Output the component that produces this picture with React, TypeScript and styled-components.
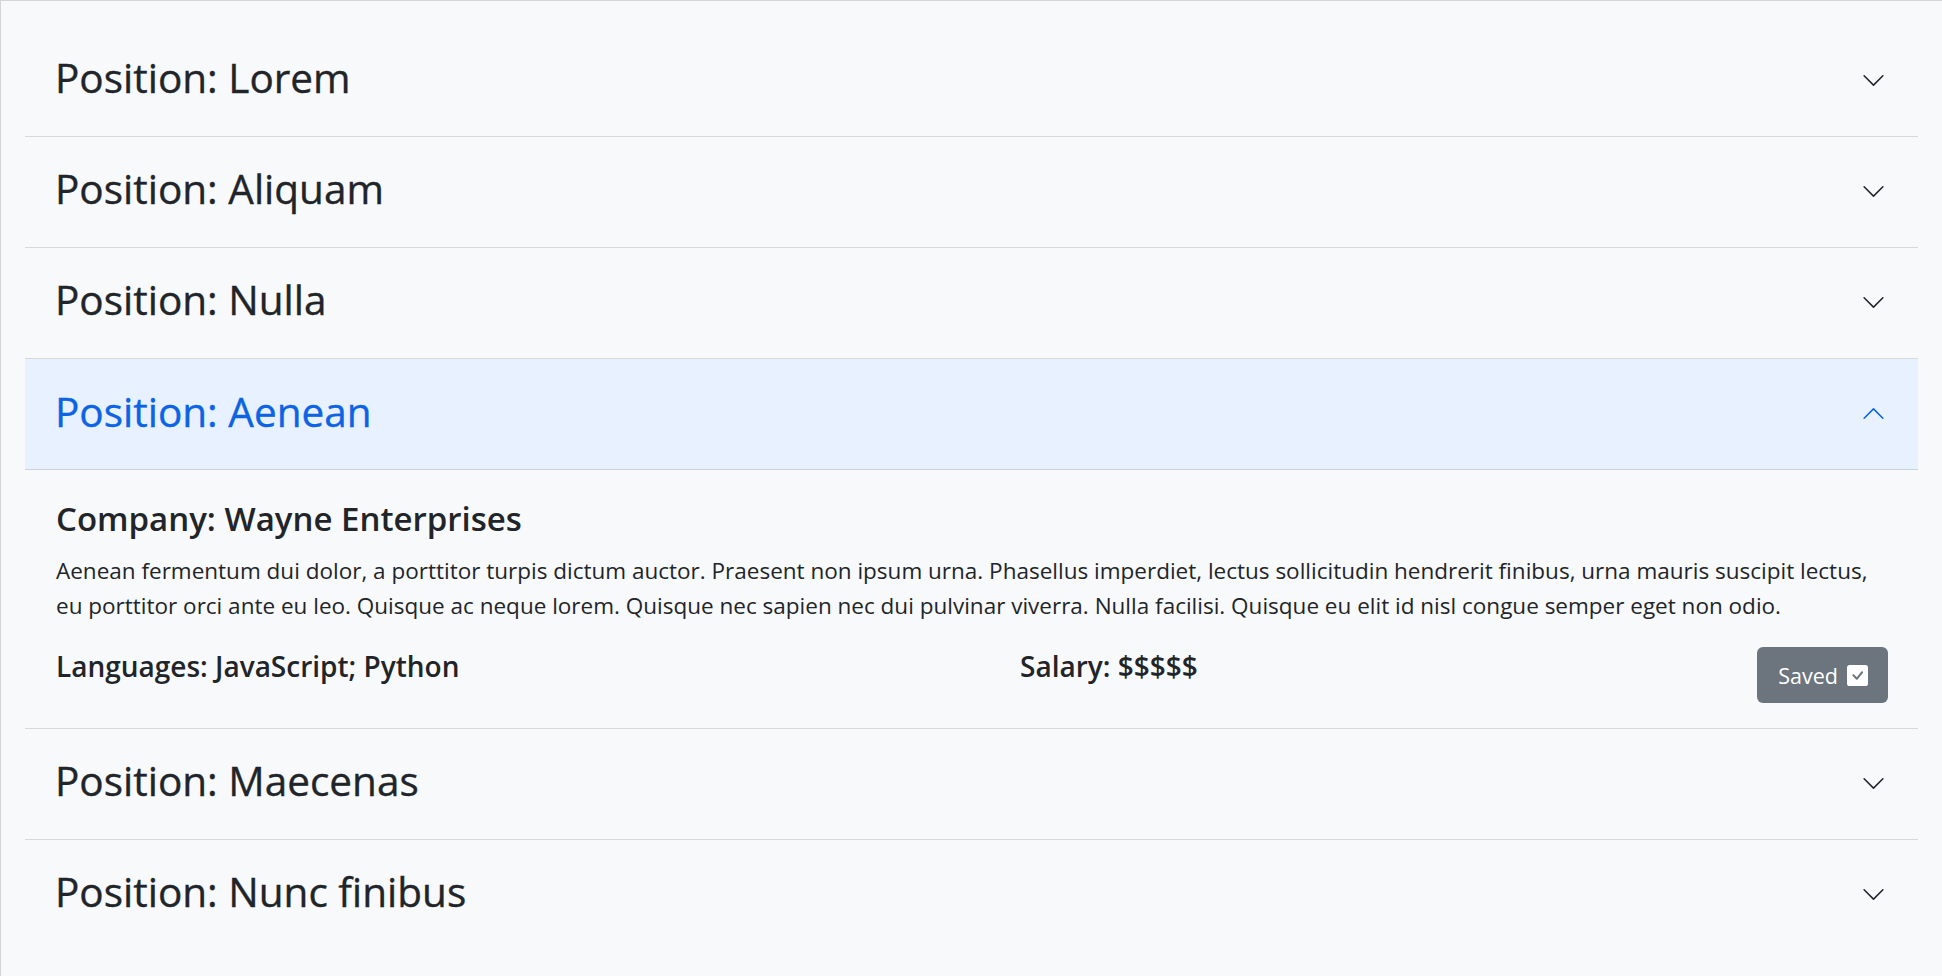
import { useState } from 'react';
import styled, { createGlobalStyle } from 'styled-components';

interface Job {
  position: string;
  company: string;
  description: string;
  languages: string;
  salary: string;
}

const LOREM =
  'Aenean fermentum dui dolor, a porttitor turpis dictum auctor. Praesent non ipsum urna. Phasellus imperdiet, lectus sollicitudin hendrerit finibus, urna mauris suscipit lectus, eu porttitor orci ante eu leo. Quisque ac neque lorem. Quisque nec sapien nec dui pulvinar viverra. Nulla facilisi. Quisque eu elit id nisl congue semper eget non odio.';

const jobs: Job[] = [
  { position: 'Lorem', company: 'Acme Corporation', description: LOREM, languages: 'Java', salary: '$$$' },
  { position: 'Aliquam', company: 'Globex', description: LOREM, languages: 'Go; Rust', salary: '$$$$' },
  { position: 'Nulla', company: 'Initech', description: LOREM, languages: 'C#', salary: '$$' },
  { position: 'Aenean', company: 'Wayne Enterprises', description: LOREM, languages: 'JavaScript; Python', salary: '$$$$$' },
  { position: 'Maecenas', company: 'Stark Industries', description: LOREM, languages: 'TypeScript', salary: '$$$$' },
  { position: 'Nunc finibus', company: 'Umbrella', description: LOREM, languages: 'Ruby', salary: '$$$' },
];

function ChevronIcon({ $open }: { $open: boolean }) {
  return (
    <Chevron $open={$open} viewBox="0 0 16 16" aria-hidden="true">
      <path
        fillRule="evenodd"
        d="M1.646 4.646a.5.5 0 0 1 .708 0L8 10.293l5.646-5.647a.5.5 0 0 1 .708.708l-6 6a.5.5 0 0 1-.708 0l-6-6a.5.5 0 0 1 0-.708z"
      />
    </Chevron>
  );
}

function CheckSquareIcon() {
  return (
    <CheckBox viewBox="0 0 16 16" aria-hidden="true">
      <path d="M2 0a2 2 0 0 0-2 2v12a2 2 0 0 0 2 2h12a2 2 0 0 0 2-2V2a2 2 0 0 0-2-2H2zm10.03 4.97a.75.75 0 0 1 .011 1.05l-3.992 4.99a.75.75 0 0 1-1.08.02L4.324 8.384a.75.75 0 1 1 1.06-1.06l2.094 2.093 3.473-4.425a.75.75 0 0 1 1.08-.022z" />
    </CheckBox>
  );
}

export default function App() {
  const [openIndex, setOpenIndex] = useState<number | null>(3);
  const [saved, setSaved] = useState<boolean>(true);

  return (
    <>
      <GlobalStyle />
      <Page>
        <Accordion>
          {jobs.map((job, i) => {
            const open = openIndex === i;
            return (
              <Item key={job.position}>
                <HeaderButton
                  type="button"
                  $open={open}
                  onClick={() => setOpenIndex(open ? null : i)}
                >
                  <span>Position: {job.position}</span>
                  <ChevronIcon $open={open} />
                </HeaderButton>
                {open && (
                  <Body>
                    <CompanyTitle>Company: {job.company}</CompanyTitle>
                    <Description>{job.description}</Description>
                    <MetaRow>
                      <MetaText>Languages: {job.languages}</MetaText>
                      <MetaText>Salary: {job.salary}</MetaText>
                      <SavedButton type="button" onClick={() => setSaved(!saved)}>
                        {saved ? 'Saved' : 'Save'}
                        <CheckSquareIcon />
                      </SavedButton>
                    </MetaRow>
                  </Body>
                )}
              </Item>
            );
          })}
        </Accordion>
      </Page>
    </>
  );
}

const GlobalStyle = createGlobalStyle`
  html, body {
    margin: 0;
    padding: 0;
    background: #f8f9fa;
  }
  body {
    font-family: "Segoe UI", "Open Sans", "Noto Sans", sans-serif;
    color: #212529;
  }
  * {
    box-sizing: border-box;
  }
`;

const Page = styled.div`
  min-height: 100vh;
  border-top: 1px solid #d4d5d6;
  border-left: 1px solid #d4d5d6;
  padding: 25px 24px 24px 24px;
`;

const Accordion = styled.div`
  display: flex;
  flex-direction: column;
`;

const Item = styled.div`
  border-bottom: 1px solid rgba(0, 0, 0, 0.125);

  &:last-child {
    border-bottom: 0;
  }
`;

const HeaderButton = styled.button<{ $open: boolean }>`
  display: flex;
  align-items: center;
  justify-content: space-between;
  width: 100%;
  height: ${(p) => (p.$open ? '111px' : '110px')};
  padding: 28px 32px 34px 30px;
  border: 0;
  background: ${(p) => (p.$open ? '#e7f1ff' : 'transparent')};
  box-shadow: ${(p) => (p.$open ? 'inset 0 -1px 0 rgba(0, 0, 0, 0.125)' : 'none')};
  color: ${(p) => (p.$open ? '#0c63e4' : '#212529')};
  font-family: inherit;
  font-size: 40.5px;
  font-weight: 400;
  line-height: 48px;
  text-align: left;
  -webkit-text-stroke: 0.35px currentColor;
  cursor: pointer;
`;

const Chevron = styled.svg<{ $open: boolean }>`
  flex-shrink: 0;
  width: 25px;
  height: 25px;
  margin-top: 4px;
  fill: currentColor;
  transform: ${(p) => (p.$open ? 'rotate(-180deg)' : 'none')};
`;

const Body = styled.div`
  padding: 29px 30px 25px 31px;
`;

const CompanyTitle = styled.h3`
  margin: 0 0 14px;
  font-size: 33px;
  font-weight: 600;
  line-height: 40px;
`;

const Description = styled.p`
  margin: 0 0 24px;
  font-size: 22.5px;
  line-height: 35px;
`;

const MetaRow = styled.div`
  display: grid;
  grid-template-columns: 964px 1fr auto;
  align-items: start;
`;

const MetaText = styled.h5`
  margin: 4px 0 0;
  font-size: 28px;
  font-weight: 600;
  line-height: 30px;
`;

const SavedButton = styled.button`
  display: flex;
  align-items: center;
  gap: 9px;
  height: 56px;
  padding: 0 20px 0 21px;
  border: 0;
  border-radius: 6px;
  background: #6c757d;
  color: #fff;
  font-family: inherit;
  font-size: 21.5px;
  cursor: pointer;
`;

const CheckBox = styled.svg`
  width: 21px;
  height: 21px;
  fill: currentColor;
`;
